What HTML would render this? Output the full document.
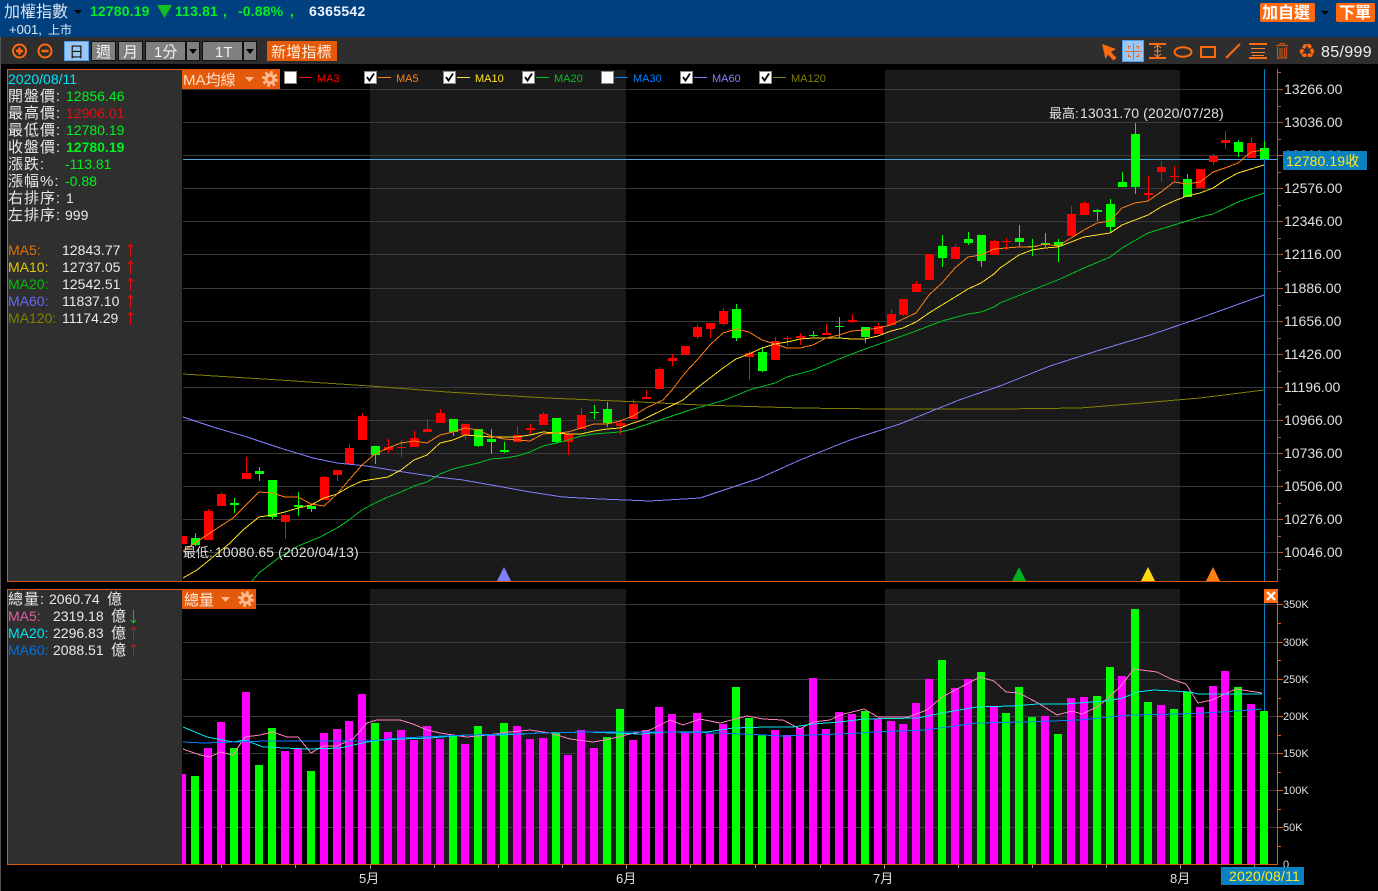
<!DOCTYPE html>
<html><head><meta charset="utf-8"><title>加權指數</title>
<style>
html,body{margin:0;padding:0;background:#000;width:1378px;height:891px;overflow:hidden}
svg{display:block;position:absolute;left:0;top:0}
text{font-family:"Liberation Sans","Noto Sans CJK TC",sans-serif;font-size:14px;fill:#e8e8e8;white-space:pre}
.c{font-size:15px;letter-spacing:1px}
.b{font-weight:bold;letter-spacing:.15px}
.g{fill:#00f020}
.w{fill:#e8eaf0}
.l{font-size:11px}
.ax{fill:#e0e0e0}
</style></head><body>
<svg width="1378" height="891" viewBox="0 0 1378 891" xmlns="http://www.w3.org/2000/svg">
<rect width="1378" height="891" fill="#000"/>
<rect y="0" width="1378" height="37" fill="#00407f"/>
<rect y="37" width="1378" height="27" fill="#2e2e2e"/>
<rect x="0" y="37" width="1" height="854" fill="#555"/>

<!-- shaded bands -->
<g fill="#1a1a1a"><rect x="370" y="70" width="256" height="511"/><rect x="885" y="70" width="295" height="511"/><rect x="370" y="589" width="256" height="275"/><rect x="885" y="589" width="295" height="275"/></g>

<!-- grid -->
<path shape-rendering="crispEdges" stroke="#3a3a3a" fill="none" d="M183 89.5H1278M183 122.5H1278M183 155.5H1278M183 188.5H1278M183 221.5H1278M183 254.5H1278M183 288.5H1278M183 321.5H1278M183 354.5H1278M183 387.5H1278M183 420.5H1278M183 453.5H1278M183 486.5H1278M183 519.5H1278M183 552.5H1278M183 604.5H1278M183 642.5H1278M183 679.5H1278M183 716.5H1278M183 753.5H1278M183 790.5H1278M183 827.5H1278"/>

<!-- crosshair -->
<path shape-rendering="crispEdges" stroke="#4aa8e0" fill="none" d="M183 159.5H1278"/>
<path shape-rendering="crispEdges" stroke="#0a80c8" fill="none" d="M1264.5 69V581M1264.5 589V864"/>

<!-- candles -->
<g fill="none" shape-rendering="crispEdges">
<path stroke="#f00" stroke-width="1" d="M208.5 509V540M221.5 492V506M246.5 457V479M285.5 514V539M324.5 476V500M337.5 470V481M349.5 444V464M362.5 413V440M388.5 439V453M401.5 440V457M414.5 431V447M427.5 419V432M440.5 409V423M465.5 424V440M517.5 426V442M530.5 424V434M543.5 412V425M568.5 434V455M581.5 408V429M620.5 420V435M633.5 399V419M646.5 390V399M659.5 367V389M672.5 354V366M697.5 324V339M710.5 323V338M723.5 308V326M749.5 351V380M775.5 337V360M787.5 336V346M800.5 333V345M826.5 324V335M852.5 314V323M878.5 323V334M891.5 309V325M903.5 299V316M916.5 281V292M955.5 244V259M994.5 240V255M1006.5 238V250M1071.5 206V236M1084.5 201V215M1148.5 176V200M1161.5 161V182M1174.5 166V181M1213.5 154V165M1225.5 131V149M1251.5 137V158"/>
<path stroke="#f00" stroke-width="9" d="M182.5 536V544M208.5 511V540M221.5 494V506M246.5 473V479M285.5 515V522M324.5 477V500M337.5 470V475M349.5 448V464M362.5 416V440M388.5 447V450M401.5 447V448M414.5 438V447M427.5 429V432M440.5 413V423M465.5 424V435M517.5 435V442M530.5 428V430M543.5 414V425M568.5 434V442M581.5 415V429M620.5 423V426M633.5 404V419M646.5 397V399M659.5 369V389M672.5 358V361M685.5 346V355M697.5 327V337M710.5 323V329M723.5 311V324M749.5 353V357M775.5 341V360M787.5 338V339M800.5 336V338M826.5 333V335M852.5 320V322M878.5 326V334M891.5 314V325M903.5 299V315M916.5 284V292M929.5 254V280M955.5 247V259M994.5 241V255M1006.5 241V242M1071.5 214V236M1084.5 203V215M1148.5 193V195M1161.5 167V172M1174.5 176V177M1200.5 169V188M1213.5 156V162M1225.5 140V143M1251.5 143V158"/>
<path stroke="#0f0" stroke-width="1" d="M195.5 533V546M234.5 498V513M259.5 467V481M272.5 480V519M298.5 492V516M311.5 504V512M375.5 446V464M453.5 419V436M478.5 429V447M491.5 429V454M504.5 442V453M556.5 418V444M594.5 405V419M607.5 402V427M736.5 304V341M762.5 347V372M813.5 331V337M839.5 317V338M865.5 327V343M942.5 235V267M968.5 232V245M981.5 235V267M1019.5 225V247M1032.5 239V256M1045.5 233V247M1058.5 239V262M1097.5 209V221M1110.5 199V233M1122.5 172V187M1135.5 123V194M1187.5 174V197M1238.5 140V157M1264.5 141V159"/>
<path stroke="#0f0" stroke-width="9" d="M195.5 538V545M234.5 503V505M259.5 471V474M272.5 480V517M298.5 505V507M311.5 506V509M375.5 446V455M453.5 419V432M478.5 429V446M491.5 439V442M504.5 450V452M556.5 418V442M594.5 412V413M607.5 409V423M736.5 309V338M762.5 352V371M813.5 335V336M839.5 326V327M865.5 327V337M942.5 246V258M968.5 239V243M981.5 235V261M1019.5 238V242M1032.5 246V247M1045.5 243V245M1058.5 242V246M1097.5 210V212M1110.5 204V227M1122.5 182V187M1135.5 134V187M1187.5 179V197M1238.5 142V152M1264.5 148V159"/>
</g>

<!-- price MA lines -->
<g fill="none" stroke-width="1" shape-rendering="crispEdges">
<polyline stroke="#808000" points="183,374 279,380 370,386 447,392 547,398 640,402 700,405 800,408 880,409 1000,409 1080,408 1130,404 1200,398 1264,390"/>
<polyline stroke="#8080ff" points="183,417 213,427 247,437 280,448 313,458 337,463 367,466 397,471 437,477 463,480 497,486 530,492 563,497 600,499 650,501 700,498 730,488 760,478 800,460 850,440 900,424 959,400 1000,386 1050,366 1100,350 1150,335 1200,318 1264,295"/>
<polyline stroke="#00c020" points="252,581 260,572 280,557 298,546 320,537 337,528 349,520 362,510 375,503 388,497 401,492 414,486 427,482 440,474 453,469 465,466 478,463 491,459 504,458 517,456 530,452 543,446 556,443 568,440 581,436 594,434 607,433 620,432 633,429 660,420 690,410 725,400 749,390 775,383 787,377 813,370 839,359 865,349 891,340 916,331 942,321 968,314 981,312 994,307 1000,303 1060,279 1084,268 1110,257 1122,248 1148,233 1174,225 1200,217 1213,214 1238,202 1264,193"/>
<polyline stroke="#ffe020" points="183,578 197,570 213,557 230,543 243,530 259,517 272,515 285,512 298,508 311,505 324,498 337,494 349,487 362,481 375,479 388,477 401,470 414,460 427,455 440,443 453,440 465,435 478,436 491,437 504,437 517,437 530,435 543,432 556,433 568,434 581,434 594,431 607,429 620,428 633,423 640,421 683,400 697,388 710,378 723,368 736,359 749,354 762,348 775,344 787,342 800,339 813,338 839,338 852,339 865,339 878,336 891,331 903,328 916,322 929,313 942,305 955,297 968,289 981,283 994,274 1000,268 1019,255 1032,250 1045,248 1058,247 1071,242 1084,237 1097,235 1110,233 1122,225 1135,220 1148,215 1161,207 1174,201 1187,196 1200,193 1213,188 1225,180 1238,173 1251,169 1264,165"/>
<polyline stroke="#ff8010" points="183,551 213,531 233,518 259,492 272,493 285,497 298,497 311,504 324,506 337,494 349,480 362,465 375,454 388,448 401,443 414,441 427,443 440,435 453,432 465,428 478,430 491,436 504,439 517,440 530,441 543,434 556,433 568,432 581,428 594,424 607,424 620,421 633,416 646,408 663,400 672,390 685,373 697,360 710,345 723,333 736,329 749,332 762,340 775,344 787,348 800,348 813,345 826,338 839,335 852,331 865,330 878,328 891,325 903,319 916,313 929,295 942,283 955,268 968,257 981,255 994,249 1006,248 1019,247 1032,247 1045,244 1058,246 1071,238 1084,230 1097,223 1110,221 1122,208 1135,203 1148,201 1161,192 1174,182 1187,184 1200,182 1213,172 1225,168 1238,163 1251,152 1264,150"/>
</g>

<!-- volume bars -->
<g fill="none" shape-rendering="crispEdges" stroke-width="8">
<path stroke="#f0f" d="M182 864V774M208 864V748M221 864V722M246 864V692M285 864V751M298 864V749M324 864V733M337 864V729M349 864V721M362 864V694M388 864V732M401 864V730M414 864V740M427 864V726M440 864V739M465 864V744M491 864V734M517 864V726M530 864V739M543 864V738M568 864V755M581 864V730M594 864V748M633 864V740M646 864V730M659 864V707M672 864V714M685 864V732M697 864V713M710 864V734M723 864V724M775 864V730M787 864V735M800 864V728M813 864V678M826 864V729M839 864V712M852 864V714M878 864V719M891 864V721M903 864V724M916 864V703M929 864V679M955 864V688M968 864V679M994 864V707M1045 864V716M1071 864V698M1084 864V697M1122 864V676M1161 864V705M1200 864V707M1213 864V686M1225 864V671M1251 864V704"/>
<path stroke="#0f0" d="M195 864V776M234 864V748M259 864V765M272 864V728M311 864V771M375 864V723M453 864V735M478 864V726M504 864V723M556 864V733M607 864V737M620 864V709M736 864V687M749 864V718M762 864V735M865 864V711M942 864V660M981 864V672M1006 864V713M1019 864V687M1032 864V717M1058 864V734M1097 864V696M1110 864V667M1135 864V609M1148 864V702M1174 864V709M1187 864V692M1238 864V687M1264 864V711"/>
</g>

<!-- volume MA lines -->
<g fill="none" stroke-width="1" shape-rendering="crispEdges">
<polyline stroke="#ff80c0" points="183,749 200,755 210,757 220,752 233,755 245,737 260,735 273,732 287,737 298,737 311,753 323,746 337,746 353,739 367,723 377,720 400,720 413,724 427,730 440,733 453,735 467,737 487,735 510,732 530,730 550,733 570,739 593,742 610,739 630,734 650,730 670,720 683,725 700,719 720,723 747,716 763,719 783,720 800,729 813,722 830,720 840,715 864,709 878,717 895,717 908,717 927,710 942,697 959,688 980,677 994,681 1006,692 1019,693 1038,703 1057,715 1072,711 1082,714 1099,706 1120,687 1134,669 1157,672 1171,679 1186,684 1198,703 1212,700 1236,689 1262,693"/>
<polyline stroke="#00e8f0" points="183,727 207,737 233,742 245,740 263,747 307,749 340,748 367,742 382,740 400,739 430,738 467,735 500,735 540,733 587,732 613,733 640,734 667,732 707,732 733,728 767,727 793,727 813,724 840,722 864,719 918,718 942,713 977,707 1011,706 1038,704 1065,704 1106,701 1123,698 1137,692 1154,690 1191,692 1198,694 1262,694"/>
<polyline stroke="#0080ff" points="183,742 203,743 267,741 367,741 400,738 467,735 587,732 667,732 717,733 743,734 783,736 840,734 874,732 925,730 977,723 1024,722 1079,720 1130,715 1181,714 1222,712 1262,709"/>
</g>

<!-- frames and axes -->
<g shape-rendering="crispEdges">
<rect x="8" y="70" width="174" height="511" fill="#2f2f2f"/>
<rect x="8" y="590" width="174" height="274" fill="#2f2f2f"/>
<path fill="none" stroke="#d85a10" d="M7.5 69V582M7 69.5H182M7.5 589V865M7 589.5H182M7 581.5H1278M7 864.5H1278"/>
<path fill="none" stroke="#b85a28" d="M1277.5 69V581M1278 89.5H1283M1278 122.5H1283M1278 155.5H1283M1278 188.5H1283M1278 221.5H1283M1278 254.5H1283M1278 288.5H1283M1278 321.5H1283M1278 354.5H1283M1278 387.5H1283M1278 420.5H1283M1278 453.5H1283M1278 486.5H1283M1278 519.5H1283M1278 552.5H1283M1278 72.5H1281M1278 106.5H1281M1278 139.5H1281M1278 172.5H1281M1278 205.5H1281M1278 238.5H1281M1278 271.5H1281M1278 305.5H1281M1278 338.5H1281M1278 371.5H1281M1278 404.5H1281M1278 437.5H1281M1278 470.5H1281M1278 503.5H1281M1278 536.5H1281M1278 569.5H1281"/>
<path fill="none" stroke="#e85a10" d="M1277.5 589V864M1278 604.5H1283M1278 642.5H1283M1278 679.5H1283M1278 716.5H1283M1278 753.5H1283M1278 790.5H1283M1278 827.5H1283M1278 623.5H1281M1278 660.5H1281M1278 698.5H1281M1278 735.5H1281M1278 772.5H1281M1278 809.5H1281M1278 846.5H1281"/>
<path fill="none" stroke="#999" d="M221.5 865V868M295.5 865V868M370.5 865V869M434.5 865V868M498.5 865V868M562.5 865V868M626.5 865V869M690.5 865V868M755.5 865V868M820.5 865V868M884.5 865V869M958.5 865V868M1032.5 865V868M1106.5 865V868M1180.5 865V869M1254.5 865V868"/>
</g>

<!-- marker triangles -->
<path d="M504 567L511 581H497Z" fill="#8080ff"/>
<path d="M1019 567L1026 581H1012Z" fill="#00b020"/>
<path d="M1148 567L1155 581H1141Z" fill="#ffd810"/>
<path d="M1213 567L1220 581H1206Z" fill="#ff8010"/>

<!-- header -->
<text x="4" y="17" style="font-size:16px;fill:#d8e4f4">加權指數</text>
<path d="M74 10H82L78 14Z" fill="#000"/>
<text x="90" y="16" class="b g">12780.19</text>
<path d="M157 5H172L164.500 18Z" fill="#10c020"/>
<text x="175" y="16" class="b g">113.81</text>
<text x="223" y="16" class="b g">,</text>
<text x="238" y="16" class="b g">-0.88%</text>
<text x="290" y="16" class="b g">,</text>
<text x="309" y="16" class="b" style="fill:#f0f4ff;letter-spacing:.3px">6365542</text>
<text x="9" y="34" style="font-size:13px;fill:#e0e8f4">+001,</text>
<text x="48" y="34" style="font-size:12px;fill:#e0e8f4">上市</text>

<rect x="1260" y="3" width="55" height="19" rx="2" fill="#ff6a10"/>
<text x="1262" y="18" class="b" style="font-size:16px;fill:#fff;letter-spacing:0">加自選</text>
<path d="M1321 11H1329L1325 15Z" fill="#000"/>
<rect x="1336" y="3" width="39" height="19" rx="2" fill="#ff6a10"/>
<text x="1339" y="18" class="b" style="font-size:16px;fill:#fff;letter-spacing:0">下單</text>

<!-- toolbar left -->
<g fill="none" stroke="#ff6a10" stroke-width="2">
<circle cx="19.500" cy="51" r="6.500"/><circle cx="45" cy="51" r="6.500"/>
<path d="M16 51H23M19.500 47.500V54.500M41.500 51H48.500" stroke-width="2.500"/>
</g>
<g shape-rendering="crispEdges">
<rect x="64.500" y="41.500" width="24" height="19" fill="#9cc6f4" stroke="#4aa0f0"/>
<rect x="91.500" y="41.500" width="24" height="19" fill="#808080" stroke="#111"/>
<rect x="118.500" y="41.500" width="24" height="19" fill="#808080" stroke="#111"/>
<rect x="145.500" y="41.500" width="40" height="19" fill="#808080" stroke="#111"/>
<rect x="186.500" y="41.500" width="13" height="19" fill="#808080" stroke="#111"/>
<rect x="202.500" y="41.500" width="40" height="19" fill="#808080" stroke="#111"/>
<rect x="243.500" y="41.500" width="13" height="19" fill="#808080" stroke="#111"/>
<rect x="267" y="41" width="70" height="20" fill="#e55a0a"/>
</g>
<path d="M189 49H197L193 54ZM246 49H254L250 54Z" fill="#000"/>
<text x="69" y="57" style="font-size:15px;fill:#111">日</text>
<text x="96" y="57" style="font-size:15px;fill:#f0f0f0">週</text>
<text x="123" y="57" style="font-size:15px;fill:#f0f0f0">月</text>
<text x="154" y="57" style="font-size:15px;fill:#f0f0f0">1分</text>
<text x="215" y="57" style="font-size:15px;fill:#f0f0f0">1T</text>
<text x="271" y="57" style="font-size:15px;fill:#ffeee0;letter-spacing:.2px">新增指標</text>

<!-- toolbar right -->
<path d="M1102 44L1116 49L1111 52L1116.500 58L1113.500 60.500L1108 54.500L1105.500 59Z" fill="#ff6a10"/>
<rect x="1122.500" y="40.500" width="21" height="21" fill="#9cc6f4" stroke="#4aa0f0" shape-rendering="crispEdges"/>
<path d="M1125 51.500H1142M1133.500 43V60" stroke="#e86a20" fill="none" shape-rendering="crispEdges"/>
<path d="M1128.500 49V46.500H1131M1136 46.500H1138.500V49M1138.500 54V56.500H1136M1131 56.500H1128.500V54" stroke="#e86a20" fill="none" shape-rendering="crispEdges"/>
<path d="M1149 44H1166M1149 58H1166" stroke="#ff6a10" stroke-width="2" fill="none"/>
<path d="M1157.500 45V57M1154 48L1157.500 45L1161 48M1154 54L1157.500 57L1161 54M1154 51H1161" stroke="#ff8030" fill="none"/>
<ellipse cx="1183" cy="52" rx="8.500" ry="4.700" fill="none" stroke="#ff6a10" stroke-width="2"/>
<rect x="1201" y="47" width="14" height="10" fill="none" stroke="#ff6a10" stroke-width="2"/>
<path d="M1226 58L1240 44" stroke="#ff6a10" stroke-width="2" fill="none"/>
<path d="M1249 44H1267M1249 58H1267" stroke="#ff6a10" stroke-width="2" fill="none"/>
<path d="M1251 48.500H1265M1251 52.500H1265M1252 55.500H1264" stroke="#ff8030" stroke-width="1" fill="none"/>
<path d="M1276 45.500H1288M1280 45V43.500H1284V45M1277.500 47V58H1286.500V47M1280 48V57M1282 48V57M1284.500 48V57" stroke="#c0541c" stroke-width="1.200" fill="none"/>
<text x="1298" y="58" style="font-family:'DejaVu Sans',sans-serif;font-size:20px;font-weight:bold;fill:#ff6a10">♻</text>
<text x="1321" y="57" style="font-size:16px;fill:#f0f0f0;letter-spacing:.35px">85/999</text>

<!-- MA legend -->
<rect x="182" y="69" width="98" height="20" fill="#e55a0a"/>
<text x="183" y="85" style="font-size:15px;fill:#ffdcc8">MA均線</text>
<path d="M245 77H254L249.500 82Z" fill="#ffb890"/>
<g fill="#ffb890">
<circle cx="270" cy="79" r="6.500" fill="none" stroke="#ffb890" stroke-width="3" stroke-dasharray="2.600 2.500"/>
<circle cx="270" cy="79" r="5.500"/>
<circle cx="270" cy="79" r="2.300" fill="#e55a0a"/>
</g>
<g shape-rendering="crispEdges">
<g fill="#fff" stroke="#888"><rect x="284.500" y="71.500" width="12" height="12"/><rect x="364.500" y="71.500" width="12" height="12"/><rect x="443.500" y="71.500" width="12" height="12"/><rect x="522.500" y="71.500" width="12" height="12"/><rect x="601.500" y="71.500" width="12" height="12"/><rect x="680.500" y="71.500" width="12" height="12"/><rect x="759.500" y="71.500" width="12" height="12"/></g>
<rect x="299" y="77" width="13" height="1" fill="#f00"/>
<rect x="378" y="77" width="13" height="1" fill="#ff8010"/>
<rect x="457" y="77" width="13" height="1" fill="#ffe020"/>
<rect x="536" y="77" width="13" height="1" fill="#00c020"/>
<rect x="615" y="77" width="13" height="1" fill="#0080ff"/>
<rect x="694" y="77" width="13" height="1" fill="#8080ff"/>
<rect x="773" y="77" width="13" height="1" fill="#808000"/>
</g>
<g fill="none" stroke="#000" stroke-width="1.800">
<path d="M367 77L369.500 80.500L374 73.500"/><path d="M446 77L448.500 80.500L453 73.500"/><path d="M525 77L527.500 80.500L532 73.500"/><path d="M683 77L685.500 80.500L690 73.500"/><path d="M762 77L764.500 80.500L769 73.500"/>
</g>
<text x="317" y="82" class="l" style="fill:#f00">MA3</text>
<text x="396" y="82" class="l" style="fill:#ff8010">MA5</text>
<text x="475" y="82" class="l" style="fill:#ffe020">MA10</text>
<text x="554" y="82" class="l" style="fill:#00c020">MA20</text>
<text x="633" y="82" class="l" style="fill:#0080ff">MA30</text>
<text x="712" y="82" class="l" style="fill:#8080ff">MA60</text>
<text x="791" y="82" class="l" style="fill:#808000">MA120</text>

<!-- volume legend box -->
<rect x="182" y="589" width="74" height="20" fill="#e55a0a"/>
<text x="184" y="605" style="font-size:15px;fill:#ffe8d8">總量</text>
<path d="M221 597H230L225.500 602Z" fill="#ffb890"/>
<circle cx="246" cy="599" r="6.500" fill="none" stroke="#ffb890" stroke-width="3" stroke-dasharray="2.600 2.500"/>
<circle cx="246" cy="599" r="5.500" fill="#ffb890"/>
<circle cx="246" cy="599" r="2.300" fill="#e55a0a"/>
<rect x="1264" y="589" width="14" height="14" fill="#ff6a10"/>
<path d="M1267 592L1275 600M1275 592L1267 600" stroke="#fff" stroke-width="2.200" fill="none"/>

<!-- left info panel -->
<text x="8" y="84" style="fill:#00e4ff">2020/08/11</text>
<text x="8" y="101" class="c">開盤價:</text><text x="66" y="101" style="fill:#00f020">12856.46</text>
<text x="8" y="118" class="c">最高價:</text><text x="66" y="118" style="fill:#e01010">12906.01</text>
<text x="8" y="135" class="c">最低價:</text><text x="66" y="135" style="fill:#00f020">12780.19</text>
<text x="8" y="152" class="c">收盤價:</text><text x="66" y="152" class="b" style="fill:#00f020;letter-spacing:0">12780.19</text>
<text x="8" y="169" class="c">漲跌:</text><text x="65" y="169" style="fill:#00f020">-113.81</text>
<text x="8" y="186" class="c">漲幅%:</text><text x="65" y="186" style="fill:#00f020">-0.88</text>
<text x="8" y="203" class="c">右排序:</text><text x="66" y="203" class="w">1</text>
<text x="8" y="220" class="c">左排序:</text><text x="65" y="220" class="w">999</text>
<text x="8" y="255" style="fill:#e07000">MA5:</text><text x="62" y="255" class="w">12843.77</text>
<text x="8" y="272" style="fill:#e0c800">MA10:</text><text x="62" y="272" class="w">12737.05</text>
<text x="8" y="289" style="fill:#00c000">MA20:</text><text x="62" y="289" class="w">12542.51</text>
<text x="8" y="306" style="fill:#6868f0">MA60:</text><text x="62" y="306" class="w">11837.10</text>
<text x="8" y="323" style="fill:#808000">MA120:</text><text x="62" y="323" class="w">11174.29</text>
<path fill="none" stroke="#e01010" d="M130.500 244V257M128 247L130.500 244L133 247M130.500 261V274M128 264L130.500 261L133 264M130.500 278V291M128 281L130.500 278L133 281M130.500 295V308M128 298L130.500 295L133 298M130.500 312V325M128 315L130.500 312L133 315"/>

<!-- left volume panel -->
<text x="8" y="604" class="c">總量:</text><text x="49" y="604" class="w">2060.74</text><text x="107" y="604" class="c">億</text>
<text x="8" y="621" style="fill:#e060a0">MA5:</text><text x="53" y="621" class="w">2319.18</text><text x="111" y="621" class="c">億</text>
<text x="8" y="638" style="fill:#00e8f0">MA20:</text><text x="53" y="638" class="w">2296.83</text><text x="111" y="638" class="c">億</text>
<text x="8" y="655" style="fill:#0070e0">MA60:</text><text x="53" y="655" class="w">2088.51</text><text x="111" y="655" class="c">億</text>
<path fill="none" stroke="#10c020" d="M133.500 610V623M131 620L133.500 623L136 620"/>
<path fill="none" stroke="#e01010" d="M133.500 627V640M131 630L133.500 627L136 630M133.500 644V657M131 647L133.500 644L136 647"/>

<!-- annotations -->
<text x="1049" y="118" style="font-size:13px;fill:#e0e0e0">最高:</text>
<text x="1080" y="118" style="fill:#e0e0e0;letter-spacing:.1px">13031.70 (2020/07/28)</text>
<text x="183" y="557" style="font-size:13px;fill:#e0e0e0">最低:</text>
<text x="215" y="557" style="fill:#e0e0e0;letter-spacing:.1px">10080.65 (2020/04/13)</text>

<!-- price axis labels -->
<g class="ax">
<text class="ax" x="1284" y="94">13266.00</text>
<text class="ax" x="1284" y="127">13036.00</text>
<text class="ax" x="1284" y="160">12806.00</text>
<text class="ax" x="1284" y="193">12576.00</text>
<text class="ax" x="1284" y="226">12346.00</text>
<text class="ax" x="1284" y="259">12116.00</text>
<text class="ax" x="1284" y="293">11886.00</text>
<text class="ax" x="1284" y="326">11656.00</text>
<text class="ax" x="1284" y="359">11426.00</text>
<text class="ax" x="1284" y="392">11196.00</text>
<text class="ax" x="1284" y="425">10966.00</text>
<text class="ax" x="1284" y="458">10736.00</text>
<text class="ax" x="1284" y="491">10506.00</text>
<text class="ax" x="1284" y="524">10276.00</text>
<text class="ax" x="1284" y="557">10046.00</text>
</g>
<rect x="1283" y="151" width="84" height="19" fill="#0a80c0"/>
<text x="1286" y="166" style="fill:#ffe820;letter-spacing:.1px">12780.19收</text>

<!-- volume axis labels -->
<text class="ax" x="1283" y="608" style="font-size:11px">350K</text>
<text class="ax" x="1283" y="646" style="font-size:11px">300K</text>
<text class="ax" x="1283" y="683" style="font-size:11px">250K</text>
<text class="ax" x="1283" y="720" style="font-size:11px">200K</text>
<text class="ax" x="1283" y="757" style="font-size:11px">150K</text>
<text class="ax" x="1283" y="794" style="font-size:11px">100K</text>
<text class="ax" x="1283" y="831" style="font-size:11px">50K</text>
<text class="ax" x="1283" y="868" style="font-size:11px">0</text>

<!-- month labels -->
<text class="ax" x="359" y="883" style="font-size:13px">5月</text>
<text class="ax" x="616" y="883" style="font-size:13px">6月</text>
<text class="ax" x="873" y="883" style="font-size:13px">7月</text>
<text class="ax" x="1170" y="883" style="font-size:13px">8月</text>
<rect x="1221" y="867" width="83" height="18" fill="#0a80c0"/>
<text x="1229" y="881" style="fill:#ffe820;letter-spacing:.2px">2020/08/11</text>
</svg>
</body></html>
